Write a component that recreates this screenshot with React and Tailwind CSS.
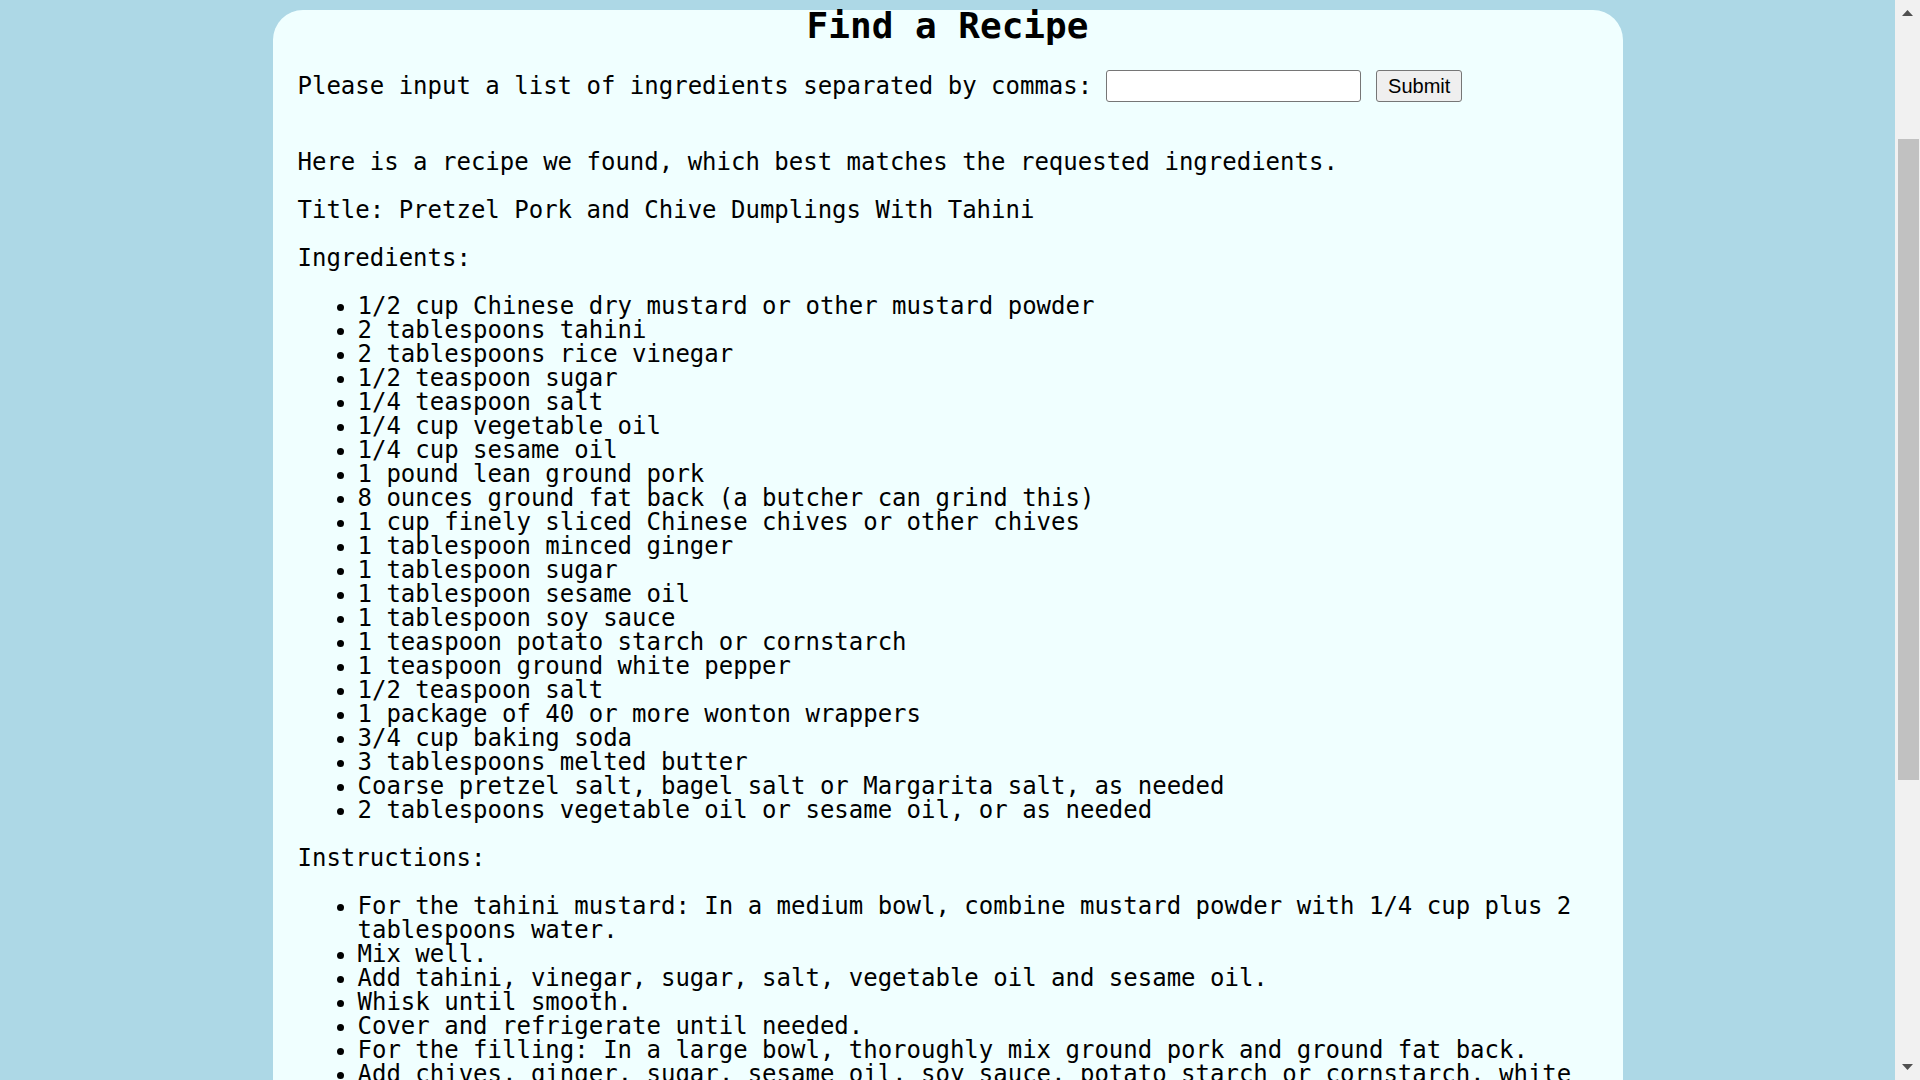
import React from "react";

const ingredients = [
  "1/2 cup Chinese dry mustard or other mustard powder",
  "2 tablespoons tahini",
  "2 tablespoons rice vinegar",
  "1/2 teaspoon sugar",
  "1/4 teaspoon salt",
  "1/4 cup vegetable oil",
  "1/4 cup sesame oil",
  "1 pound lean ground pork",
  "8 ounces ground fat back (a butcher can grind this)",
  "1 cup finely sliced Chinese chives or other chives",
  "1 tablespoon minced ginger",
  "1 tablespoon sugar",
  "1 tablespoon sesame oil",
  "1 tablespoon soy sauce",
  "1 teaspoon potato starch or cornstarch",
  "1 teaspoon ground white pepper",
  "1/2 teaspoon salt",
  "1 package of 40 or more wonton wrappers",
  "3/4 cup baking soda",
  "3 tablespoons melted butter",
  "Coarse pretzel salt, bagel salt or Margarita salt, as needed",
  "2 tablespoons vegetable oil or sesame oil, or as needed",
];

const instructions = [
  "For the tahini mustard: In a medium bowl, combine mustard powder with 1/4 cup plus 2 tablespoons water.",
  "Mix well.",
  "Add tahini, vinegar, sugar, salt, vegetable oil and sesame oil.",
  "Whisk until smooth.",
  "Cover and refrigerate until needed.",
  "For the filling: In a large bowl, thoroughly mix ground pork and ground fat back.",
  "Add chives, ginger, sugar, sesame oil, soy sauce, potato starch or cornstarch, white pepper and salt.",
  "Mix until well combined.",
  "Cover and refrigerate for at least 30 minutes.",
];

export default function App() {
  return (
    <div className="flex h-screen w-full overflow-hidden bg-[#add8e6] font-['DejaVu_Sans_Mono',monospace] text-black">
      <div className="flex-1 min-w-0 overflow-hidden">
        <div className="mx-auto mt-[10px] w-[1350px] rounded-[30px] bg-[#f0ffff] px-[25px] pb-[40px]">
          <h2 className="text-center text-[36px] font-bold leading-[32px]">Find a Recipe</h2>
          <div className="mt-[28px] flex h-[32px] items-center text-[24px] leading-[24px]">
            <span className="whitespace-pre">Please input a list of ingredients separated by commas:</span>
            <input
              type="text"
              className="ml-[14px] h-[32px] w-[255px] rounded-[3px] border border-[#767676] bg-white px-[3px] font-['Liberation_Sans',Arial,sans-serif] text-[20px] outline-none"
            />
            <button className="ml-[15px] h-[32px] w-[86px] rounded-[3px] border border-[#767676] bg-[#efefef] font-['Liberation_Sans',Arial,sans-serif] text-[20px] leading-[20px] text-black">
              Submit
            </button>
          </div>
          <div className="text-[24px] leading-[24px]">
            <p className="mt-[48px]">Here is a recipe we found, which best matches the requested ingredients.</p>
            <p className="mt-[24px]">Title: Pretzel Pork and Chive Dumplings With Tahini</p>
            <p className="mt-[24px]">Ingredients:</p>
            <ul className="mt-[24px] list-disc pl-[60px]">
              {ingredients.map((t, i) => (
                <li key={i}>{t}</li>
              ))}
            </ul>
            <p className="mt-[24px]">Instructions:</p>
            <ul className="mt-[24px] list-disc pl-[60px]">
              {instructions.map((t, i) => (
                <li key={i}>{t}</li>
              ))}
            </ul>
          </div>
        </div>
      </div>
      <div className="flex h-full w-[25px] shrink-0 flex-col items-center bg-[#f1f1f1]">
        <svg className="mt-[10px]" width="11" height="6" viewBox="0 0 11 6">
          <polygon points="5.5,0 11,6 0,6" fill="#505050" />
        </svg>
        <div className="ml-[2px] mt-[123px] h-[641px] w-[21px] bg-[#c1c1c1]" />
        <div className="flex-1" />
        <svg className="mb-[10px]" width="11" height="6" viewBox="0 0 11 6">
          <polygon points="0,0 11,0 5.5,6" fill="#505050" />
        </svg>
      </div>
    </div>
  );
}
